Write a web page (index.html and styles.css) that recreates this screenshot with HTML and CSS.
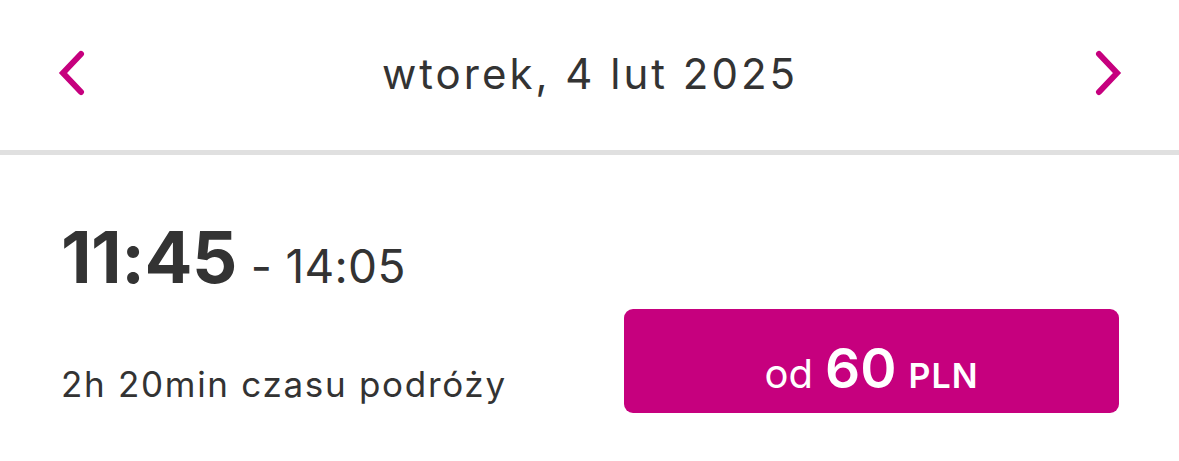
FILE: index.html
```html
<!DOCTYPE html>
<html lang="pl">
<head>
<meta charset="utf-8">
<link rel="stylesheet" href="styles.css">
</head>
<body>
<header class="datebar">
  <button class="nav nav-prev" aria-label="Poprzedni dzień">
    <svg width="30" height="46" viewBox="0 0 30 46"><path d="M24 4 L6 23 L24 42" fill="none" stroke="#c6007e" stroke-width="6" stroke-linecap="round" stroke-linejoin="miter"/></svg>
  </button>
  <div class="date">wtorek, 4 lut 2025</div>
  <button class="nav nav-next" aria-label="Następny dzień">
    <svg width="30" height="46" viewBox="0 0 30 46"><path d="M6 4 L24 23 L6 42" fill="none" stroke="#c6007e" stroke-width="6" stroke-linecap="round" stroke-linejoin="miter"/></svg>
  </button>
</header>
<div class="divider"></div>
<section class="trip">
  <div class="times">
    <span class="dep">11:45</span>
    <span class="arr">- 14:05</span>
  </div>
  <div class="bottom">
    <div class="duration">2h 20min czasu podróży</div>
    <button class="price"><span class="od">od</span> <span class="amount">60</span> <span class="cur">PLN</span></button>
  </div>
</section>
</body>
</html>
```
FILE: styles.css
```css
* { box-sizing: border-box; }
html, body { margin: 0; padding: 0; background: #fff; }
body {
  font-family: Inter, "Noto Sans", "Liberation Sans", sans-serif;
  color: #333;
  width: 1179px;
  height: 461px;
  overflow: hidden;
}
.datebar {
  height: 150px;
  display: flex;
  align-items: center;
  justify-content: space-between;
  padding: 0 54px 4px 55px;
}
.nav {
  background: none;
  border: 0;
  padding: 0;
  width: 34px;
  height: 46px;
  display: flex;
  align-items: center;
  justify-content: center;
}
.date {
  font-size: 42px;
  font-weight: 400;
  color: #333;
  letter-spacing: 3px;
}
.divider {
  height: 5px;
  background: #e0e0e0;
}
.trip {
  padding: 67px 60px 0 61px;
}
.times {
  display: flex;
  align-items: baseline;
  gap: 14px;
  line-height: 1;
}
.dep {
  font-size: 71px;
  font-weight: 700;
  letter-spacing: -0.5px;
}
.arr {
  font-size: 46px;
  font-weight: 400;
  letter-spacing: 0.3px;
}
.bottom {
  display: flex;
  justify-content: space-between;
  align-items: center;
  margin-top: 16px;
}
.duration {
  font-size: 35px;
  letter-spacing: 1.7px;
  padding-top: 46px;
}
.price {
  width: 495px;
  height: 104px;
  background: #c6007e;
  border: 0;
  border-radius: 9px;
  color: #fff;
  font-family: inherit;
  display: flex;
  align-items: baseline;
  justify-content: center;
  padding-top: 26px;
  gap: 0;
}
.od { font-size: 40px; font-weight: 400; margin-right: 12px; }
.amount { font-size: 55px; font-weight: 600; margin-right: 12px; }
.cur { font-size: 34px; font-weight: 600; letter-spacing: 1px; }
```
